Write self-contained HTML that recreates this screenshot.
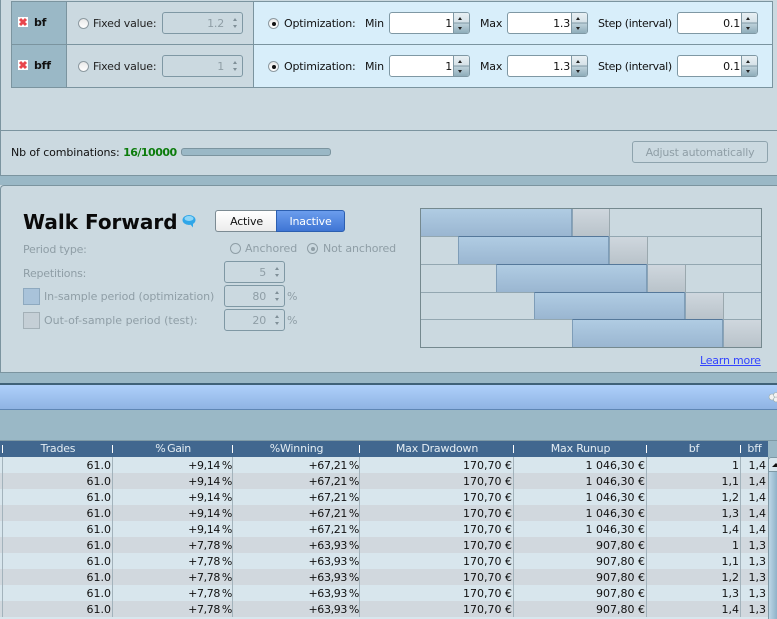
<!DOCTYPE html>
<html><head><meta charset="utf-8">
<style>
html,body{margin:0;padding:0;height:619px;overflow:hidden}
body{width:777px;position:relative;background:#cbd9e0;font-family:"DejaVu Sans","Liberation Sans",sans-serif;font-size:11px;letter-spacing:-.2px;color:#111}
div{position:absolute;box-sizing:border-box}
.t{white-space:nowrap;line-height:14px;height:14px;margin-top:1px}
.g{color:#8f9ea6}
.h{background:#7b949f}
.radio{width:11px;height:11px;border-radius:50%;background:linear-gradient(#e9e9e9,#fff);border:1px solid #8d9aa1}
.radio.on:after{content:"";position:absolute;left:2.5px;top:2.5px;width:4px;height:4px;border-radius:50%;background:#111}
.radio.dis{background:none;border-color:#8f9ea6}
.radio.dis:after{background:#8f9ea6}
.dsp{border:1px solid #7f98a4;border-radius:3px;background:#cbd9e0;text-align:right;color:#8f9ea6;line-height:22px;padding-right:18px}
.dsp:before{content:"";position:absolute;right:5px;top:5px;border:2.5px solid transparent;border-top:0;border-bottom:3px solid #7f8f97}
.dsp:after{content:"";position:absolute;right:5px;bottom:5px;border:2.5px solid transparent;border-bottom:0;border-top:3px solid #7f8f97}
.sp{width:81px;height:22px;border:1px solid #7f98a4;border-radius:3px;background:#fff;text-align:right;line-height:22px;padding-right:17px;overflow:hidden}
.sp i{position:absolute;right:0;top:0;width:15px;height:20px;background:linear-gradient(#e8f0f4 0,#d5e1e7 48%,#7f98a4 48%,#7f98a4 52%,#bfd2db 52%,#8fadba 100%);border-left:1px solid #7f98a4}
.sp i:before{content:"";position:absolute;left:4px;top:4px;border:2.5px solid transparent;border-top:0;border-bottom:3px solid #222}
.sp i:after{content:"";position:absolute;left:4px;bottom:3px;border:2.5px solid transparent;border-bottom:0;border-top:3px solid #222}
.x{left:18px;width:10px;height:10px;background:#fff}
.b{background:linear-gradient(#b0cce3,#9ab6d1);border:1px solid #7e9db8;border-top-color:#55789a;border-bottom-color:#55789a;height:28px}
.y{background:linear-gradient(#cfd7de,#b9c3ca);border:1px solid #9aa8ae;border-left-color:#8ba3b5;height:28px}
.r{left:0;width:768px;height:16px;background:#d8e6ed;letter-spacing:0}
.r.e{background:#d1d8de}
.c{top:0;height:16px;line-height:18px;text-align:right;white-space:nowrap;border-right:1px solid #a3b3bc;padding-right:1px}
.c0{left:0;width:3px;padding:0}
.c1{left:3px;width:110px}.c2{left:113px;width:120px;letter-spacing:-.35px;padding-right:0}.c3{left:233px;width:127px;letter-spacing:-.35px;padding-right:0}.c4{left:360px;width:154px}.c5{left:514px;width:133px}.c6{left:647px;width:94px}.c7{left:741px;width:27px;border:0;padding-right:2px}
.th{top:441px;height:16px;line-height:16px;color:#e4edf3;text-align:center;white-space:nowrap}
.tk{top:445px;width:1px;height:8px;background:#fff}
</style></head><body>

<!-- top table -->
<div class="h" style="left:0;top:0;width:1px;height:130px"></div>
<div style="left:12px;top:2px;width:55px;height:85px;background:#9ab8c6"></div>
<div style="left:254px;top:2px;width:518px;height:85px;background:#d8eefa"></div>
<div class="h" style="left:11px;top:1px;width:762px;height:1px"></div>
<div class="h" style="left:11px;top:44px;width:762px;height:1px"></div>
<div class="h" style="left:11px;top:87px;width:762px;height:1px"></div>
<div class="h" style="left:11px;top:1px;width:1px;height:87px"></div>
<div class="h" style="left:66px;top:1px;width:1px;height:87px"></div>
<div class="h" style="left:253px;top:1px;width:1px;height:87px"></div>
<div class="h" style="left:772px;top:1px;width:1px;height:87px"></div>

<div class="x" style="top:17px"><svg width="10" height="10" viewBox="0 0 10 10" style="display:block"><path d="M2 2L8 8M8 2L2 8" stroke="#e8464c" stroke-width="3"/></svg></div>
<div class="t" style="left:34px;top:15px;font-weight:bold">bf</div>
<div class="x" style="top:60px"><svg width="10" height="10" viewBox="0 0 10 10" style="display:block"><path d="M2 2L8 8M8 2L2 8" stroke="#e8464c" stroke-width="3"/></svg></div>
<div class="t" style="left:34px;top:58px;font-weight:bold">bff</div>

<div class="radio" style="left:78px;top:18px"></div>
<div class="t" style="left:93px;top:16px;color:#222">Fixed value:</div>
<div class="dsp" style="left:162px;top:12px;width:81px;height:22px">1.2</div>
<div class="radio" style="left:78px;top:61px"></div>
<div class="t" style="left:93px;top:59px;color:#222">Fixed value:</div>
<div class="dsp" style="left:162px;top:55px;width:81px;height:22px">1</div>

<div class="radio on" style="left:268px;top:18px"></div>
<div class="t" style="left:284px;top:16px">Optimization:</div>
<div class="t" style="left:365px;top:16px">Min</div>
<div class="sp" style="left:389px;top:12px">1<i></i></div>
<div class="t" style="left:480px;top:16px">Max</div>
<div class="sp" style="left:507px;top:12px">1.3<i></i></div>
<div class="t" style="left:598px;top:16px;letter-spacing:-.35px">Step (interval)</div>
<div class="sp" style="left:677px;top:12px">0.1<i></i></div>

<div class="radio on" style="left:268px;top:61px"></div>
<div class="t" style="left:284px;top:59px">Optimization:</div>
<div class="t" style="left:365px;top:59px">Min</div>
<div class="sp" style="left:389px;top:55px">1<i></i></div>
<div class="t" style="left:480px;top:59px">Max</div>
<div class="sp" style="left:507px;top:55px">1.3<i></i></div>
<div class="t" style="left:598px;top:59px;letter-spacing:-.35px">Step (interval)</div>
<div class="sp" style="left:677px;top:55px">0.1<i></i></div>

<!-- combinations -->
<div class="h" style="left:0;top:130px;width:777px;height:1px"></div>
<div class="h" style="left:0;top:130px;width:1px;height:45px"></div>
<div class="t" style="left:11px;top:145px;letter-spacing:-.1px">Nb of combinations: <b style="color:#0c7c0c;letter-spacing:-.5px">16/10000</b></div>
<div style="left:181px;top:148px;width:150px;height:8px;background:#9ab8c6;border:1px solid #7b949f;border-radius:3px"></div>
<div style="left:632px;top:141px;width:136px;height:22px;border:1px solid #8ea3ad;border-radius:3px;text-align:center;line-height:22px;color:#8f9ea6">Adjust automatically</div>

<!-- band -->
<div style="left:0;top:175px;width:777px;height:10px;background:#9ab8c6"></div>
<div class="h" style="left:0;top:175px;width:777px;height:1px"></div>
<div style="left:0;top:185px;width:777px;height:188px;background:#cbd9e0;border:1px solid #7b949f;border-width:1px 0 0 1px;border-top-left-radius:4px"></div>

<!-- walk forward -->
<div class="t" style="left:23px;top:208px;height:27px;line-height:27px;font-size:20px;font-weight:bold;letter-spacing:0;color:#0a0a0a">Walk Forward</div>
<svg style="position:absolute;left:182px;top:214px" width="15" height="15" viewBox="0 0 15 15"><ellipse cx="7" cy="6" rx="6.5" ry="5" fill="#2fa6e8"/><ellipse cx="7" cy="4.5" rx="4.5" ry="2.5" fill="#8fd6f7"/><path d="M8 10l3 3.5 0-4z" fill="#2fa6e8"/></svg>
<div style="left:215px;top:210px;width:62px;height:22px;border:1px solid #7c8b93;border-right:0;border-radius:3px 0 0 3px;background:linear-gradient(#fff,#ececec);text-align:center;line-height:22px">Active</div>
<div style="left:276px;top:210px;width:69px;height:22px;border:1px solid #2c5fb0;border-radius:0 3px 3px 0;background:linear-gradient(#6b9ded,#3f75d4);color:#fff;text-align:center;line-height:22px">Inactive</div>

<div class="t g" style="left:23px;top:242px">Period type:</div>
<div class="radio dis" style="left:230px;top:243px"></div>
<div class="t g" style="left:245px;top:241px;letter-spacing:0">Anchored</div>
<div class="radio dis on" style="left:307px;top:243px"></div>
<div class="t g" style="left:323px;top:241px;letter-spacing:-.1px">Not anchored</div>

<div class="t g" style="left:23px;top:266px">Repetitions:</div>
<div class="dsp" style="left:224px;top:261px;width:61px;height:22px">5</div>
<div style="left:23px;top:288px;width:17px;height:17px;background:#a9c3da;border:1px solid #8ea9bf"></div>
<div class="t g" style="left:44px;top:289px;letter-spacing:-.1px">In-sample period (optimization)</div>
<div class="dsp" style="left:224px;top:285px;width:61px;height:22px">80</div>
<div class="t g" style="left:287px;top:289px">%</div>
<div style="left:23px;top:312px;width:17px;height:17px;background:#c5cfd6;border:1px solid #a3b0b7"></div>
<div class="t g" style="left:44px;top:313px;letter-spacing:0">Out-of-sample period (test):</div>
<div class="dsp" style="left:224px;top:309px;width:61px;height:22px">20</div>
<div class="t g" style="left:287px;top:313px">%</div>

<!-- chart -->
<div class="b" style="left:420px;top:208px;width:152px;height:29px"></div>
<div class="y" style="left:572px;top:208px;width:38px;height:29px"></div>
<div class="b" style="left:458px;top:236px;width:151px;height:29px"></div>
<div class="y" style="left:609px;top:236px;width:39px;height:29px"></div>
<div class="b" style="left:496px;top:264px;width:151px;height:29px"></div>
<div class="y" style="left:647px;top:264px;width:39px;height:29px"></div>
<div class="b" style="left:534px;top:292px;width:151px;height:28px"></div>
<div class="y" style="left:685px;top:292px;width:39px;height:28px"></div>
<div class="b" style="left:572px;top:319px;width:151px;height:29px"></div>
<div class="y" style="left:723px;top:319px;width:39px;height:29px"></div>
<div style="left:421px;top:236px;width:37px;height:1px;background:#93a7b1"></div>
<div style="left:610px;top:236px;width:152px;height:1px;background:#93a7b1"></div>
<div style="left:421px;top:264px;width:75px;height:1px;background:#93a7b1"></div>
<div style="left:648px;top:264px;width:114px;height:1px;background:#93a7b1"></div>
<div style="left:421px;top:292px;width:113px;height:1px;background:#93a7b1"></div>
<div style="left:686px;top:292px;width:76px;height:1px;background:#93a7b1"></div>
<div style="left:421px;top:319px;width:151px;height:1px;background:#93a7b1"></div>
<div style="left:724px;top:319px;width:38px;height:1px;background:#93a7b1"></div>
<div style="left:420px;top:208px;width:342px;height:140px;border:1px solid #75898f"></div>
<div class="t" style="left:700px;top:353px;color:#3344ff;text-decoration:underline">Learn more</div>

<!-- lower bands -->
<div style="left:0;top:372px;width:777px;height:69px;background:#9ab8c6"></div>
<div class="h" style="left:0;top:372px;width:777px;height:1px"></div>
<div style="left:0;top:383px;width:777px;height:2px;background:#3f6278"></div>
<div style="left:0;top:385px;width:777px;height:25px;background:linear-gradient(#aed0fb,#8fb3e3);border-bottom:1px solid #5f86b4"></div>
<svg style="position:absolute;left:767px;top:391px" width="10" height="12" viewBox="0 0 10 12"><circle cx="5" cy="6" r="3" fill="#f2f2f2" stroke="#9aa" stroke-width=".6"/><circle cx="9" cy="4" r="2.5" fill="#f2f2f2" stroke="#9aa" stroke-width=".6"/><circle cx="9" cy="8.5" r="2.5" fill="#f2f2f2" stroke="#9aa" stroke-width=".6"/></svg>
<div style="left:0;top:440px;width:777px;height:1px;background:#7f9aa6"></div>

<!-- table header -->
<div style="left:0;top:441px;width:768px;height:16px;background:#41678f"></div>
<div class="th" style="left:3px;width:110px">Trades</div>
<div class="th" style="left:113px;width:120px;letter-spacing:-.4px">%&#8201;Gain</div>
<div class="th" style="left:233px;width:127px">%Winning</div>
<div class="th" style="left:360px;width:154px">Max Drawdown</div>
<div class="th" style="left:514px;width:133px">Max Runup</div>
<div class="th" style="left:647px;width:94px">bf</div>
<div class="th" style="left:741px;width:27px">bff</div>
<div class="tk" style="left:2px"></div><div class="tk" style="left:112px"></div><div class="tk" style="left:232px"></div><div class="tk" style="left:359px"></div><div class="tk" style="left:513px"></div><div class="tk" style="left:646px"></div><div class="tk" style="left:740px"></div>

<!-- rows -->
<div class="r" style="top:457px"><div class="c c0"></div><div class="c c1">61.0</div><div class="c c2">+9,14&#8201;%</div><div class="c c3">+67,21&#8201;%</div><div class="c c4">170,70 €</div><div class="c c5">1 046,30 €</div><div class="c c6">1</div><div class="c c7">1,4</div></div>
<div class="r e" style="top:473px"><div class="c c0"></div><div class="c c1">61.0</div><div class="c c2">+9,14&#8201;%</div><div class="c c3">+67,21&#8201;%</div><div class="c c4">170,70 €</div><div class="c c5">1 046,30 €</div><div class="c c6">1,1</div><div class="c c7">1,4</div></div>
<div class="r" style="top:489px"><div class="c c0"></div><div class="c c1">61.0</div><div class="c c2">+9,14&#8201;%</div><div class="c c3">+67,21&#8201;%</div><div class="c c4">170,70 €</div><div class="c c5">1 046,30 €</div><div class="c c6">1,2</div><div class="c c7">1,4</div></div>
<div class="r e" style="top:505px"><div class="c c0"></div><div class="c c1">61.0</div><div class="c c2">+9,14&#8201;%</div><div class="c c3">+67,21&#8201;%</div><div class="c c4">170,70 €</div><div class="c c5">1 046,30 €</div><div class="c c6">1,3</div><div class="c c7">1,4</div></div>
<div class="r" style="top:521px"><div class="c c0"></div><div class="c c1">61.0</div><div class="c c2">+9,14&#8201;%</div><div class="c c3">+67,21&#8201;%</div><div class="c c4">170,70 €</div><div class="c c5">1 046,30 €</div><div class="c c6">1,4</div><div class="c c7">1,4</div></div>
<div class="r e" style="top:537px"><div class="c c0"></div><div class="c c1">61.0</div><div class="c c2">+7,78&#8201;%</div><div class="c c3">+63,93&#8201;%</div><div class="c c4">170,70 €</div><div class="c c5">907,80 €</div><div class="c c6">1</div><div class="c c7">1,3</div></div>
<div class="r" style="top:553px"><div class="c c0"></div><div class="c c1">61.0</div><div class="c c2">+7,78&#8201;%</div><div class="c c3">+63,93&#8201;%</div><div class="c c4">170,70 €</div><div class="c c5">907,80 €</div><div class="c c6">1,1</div><div class="c c7">1,3</div></div>
<div class="r e" style="top:569px"><div class="c c0"></div><div class="c c1">61.0</div><div class="c c2">+7,78&#8201;%</div><div class="c c3">+63,93&#8201;%</div><div class="c c4">170,70 €</div><div class="c c5">907,80 €</div><div class="c c6">1,2</div><div class="c c7">1,3</div></div>
<div class="r" style="top:585px"><div class="c c0"></div><div class="c c1">61.0</div><div class="c c2">+7,78&#8201;%</div><div class="c c3">+63,93&#8201;%</div><div class="c c4">170,70 €</div><div class="c c5">907,80 €</div><div class="c c6">1,3</div><div class="c c7">1,3</div></div>
<div class="r e" style="top:601px"><div class="c c0"></div><div class="c c1">61.0</div><div class="c c2">+7,78&#8201;%</div><div class="c c3">+63,93&#8201;%</div><div class="c c4">170,70 €</div><div class="c c5">907,80 €</div><div class="c c6">1,4</div><div class="c c7">1,3</div></div>
<div class="r" style="top:617px;height:2px"></div>

<!-- scrollbar -->
<div style="left:768px;top:441px;width:9px;height:16px;background:#9ab8c6"></div>
<div style="left:768px;top:457px;width:9px;height:162px;background:linear-gradient(90deg,#bcd6e6,#8fb2c8);border-left:1px solid #7f98a4"></div>
<div style="left:768px;top:457px;width:9px;height:15px;background:#d8e6ed;border:1px solid #7f98a4;border-right:0;border-radius:3px 0 0 0"></div>
<div style="left:772px;top:463px;border:4px solid transparent;border-top:0;border-bottom:4px solid #111"></div>
</body></html>
